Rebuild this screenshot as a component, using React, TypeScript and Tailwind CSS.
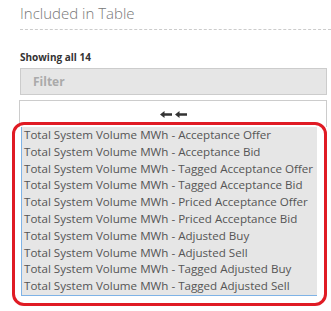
const items = [
  'Total System Volume MWh - Acceptance Offer',
  'Total System Volume MWh - Acceptance Bid',
  'Total System Volume MWh - Tagged Acceptance Offer',
  'Total System Volume MWh - Tagged Acceptance Bid',
  'Total System Volume MWh - Priced Acceptance Offer',
  'Total System Volume MWh - Priced Acceptance Bid',
  'Total System Volume MWh - Adjusted Buy',
  'Total System Volume MWh - Adjusted Sell',
  'Total System Volume MWh - Tagged Adjusted Buy',
  'Total System Volume MWh - Tagged Adjusted Sell',
]

function ArrowLeft() {
  return (
    <svg width="12" height="7" viewBox="0 0 12 7" className="fill-[#333]">
      <path d="M0 3.5 L4.5 0 L4.5 2.3 L12 2.3 L12 4.7 L4.5 4.7 L4.5 7 Z" />
    </svg>
  )
}

export default function App() {
  return (
    <div className="w-[331px] h-[311px] overflow-hidden bg-white pl-5 pr-1 font-['Open_Sans',sans-serif]">
      <div className="pt-[2px] text-[15px] leading-[22px] font-light text-[#777]">Included in Table</div>
      <div className="mt-[5px] -mr-1 border-t border-dashed border-[#ccc]" />
      <div className="mt-[20px] text-[10px] leading-[15px] font-bold text-[#333]">Showing all 14</div>
      <div className="mt-[3px] h-[27px] border border-[#ccc] bg-[#e6e6e6] pl-3 flex items-center text-[12px] font-bold text-[#aaa]">
        Filter
      </div>
      <div className="mt-[5px] -ml-px h-[27px] border border-b-0 border-[#ccc] flex justify-center items-center gap-[3px]">
        <ArrowLeft />
        <ArrowLeft />
      </div>
      <div className="relative ml-px mr-[10px]">
        <ul className="bg-[#e6e6e6] border-l border-b border-[#7fb3e6] text-[11.6px] leading-[16.8px] text-[#555]">
          {items.map((item) => (
            <li key={item} className="pl-[2px] whitespace-nowrap">
              {item}
            </li>
          ))}
        </ul>
        <div className="absolute -left-[9px] -right-[10px] -top-[5px] -bottom-[10px] rounded-[12px] border-[3px] border-[#e01b24] pointer-events-none" />
      </div>
    </div>
  )
}
